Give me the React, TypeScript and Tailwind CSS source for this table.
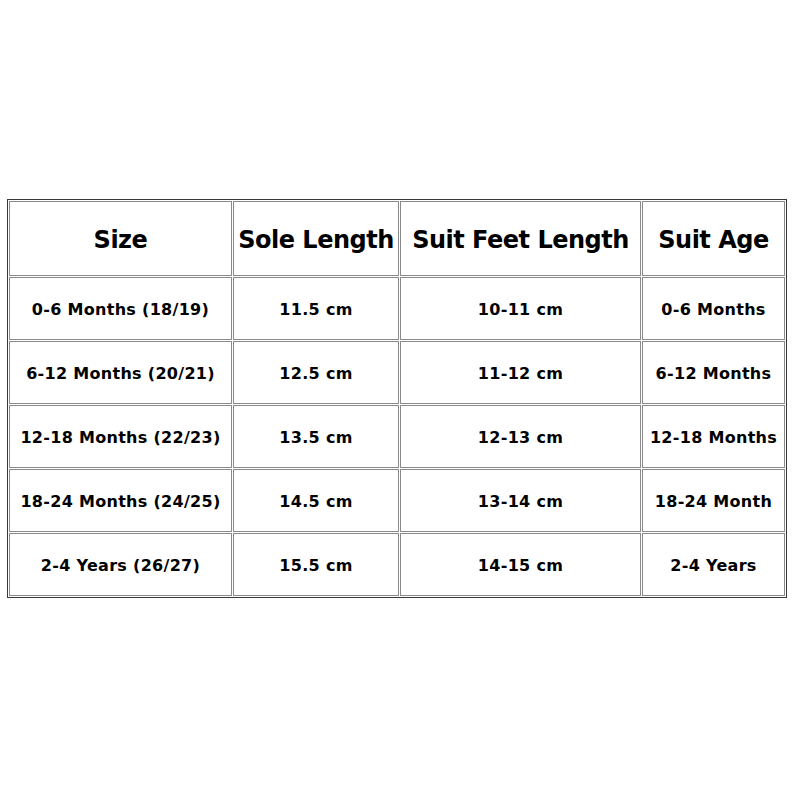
const headers = ["Size", "Sole Length", "Suit Feet Length", "Suit Age"];

const rows = [
  ["0-6 Months (18/19)", "11.5 cm", "10-11 cm", "0-6 Months"],
  ["6-12 Months (20/21)", "12.5 cm", "11-12 cm", "6-12 Months"],
  ["12-18 Months (22/23)", "13.5 cm", "12-13 cm", "12-18 Months"],
  ["18-24 Months (24/25)", "14.5 cm", "13-14 cm", "18-24 Month"],
  ["2-4 Years (26/27)", "15.5 cm", "14-15 cm", "2-4 Years"],
];

export default function App() {
  return (
    <div className="min-h-[800px] w-[800px] bg-white pt-[199px] pl-[7px] font-['Comic_Sans_MS','DejaVu_Sans',sans-serif] font-bold text-black">
      <div className="grid w-[780px] grid-cols-[223px_166px_241px_143px] grid-rows-[75px_repeat(5,63px)] gap-px border border-[#3a3a3a] p-px">
        {headers.map((h) => (
          <div key={h} className="flex items-center justify-center border border-[#8a8a8a] pt-[3px] text-[24px] tracking-[-0.5px]">
            {h}
          </div>
        ))}
        {rows.map((row, i) =>
          row.map((cell, j) => (
            <div key={`${i}-${j}`} className="flex items-center justify-center border border-[#8a8a8a] pt-[2px] text-[16px] tracking-[0.3px]">
              {cell}
            </div>
          ))
        )}
      </div>
    </div>
  );
}
